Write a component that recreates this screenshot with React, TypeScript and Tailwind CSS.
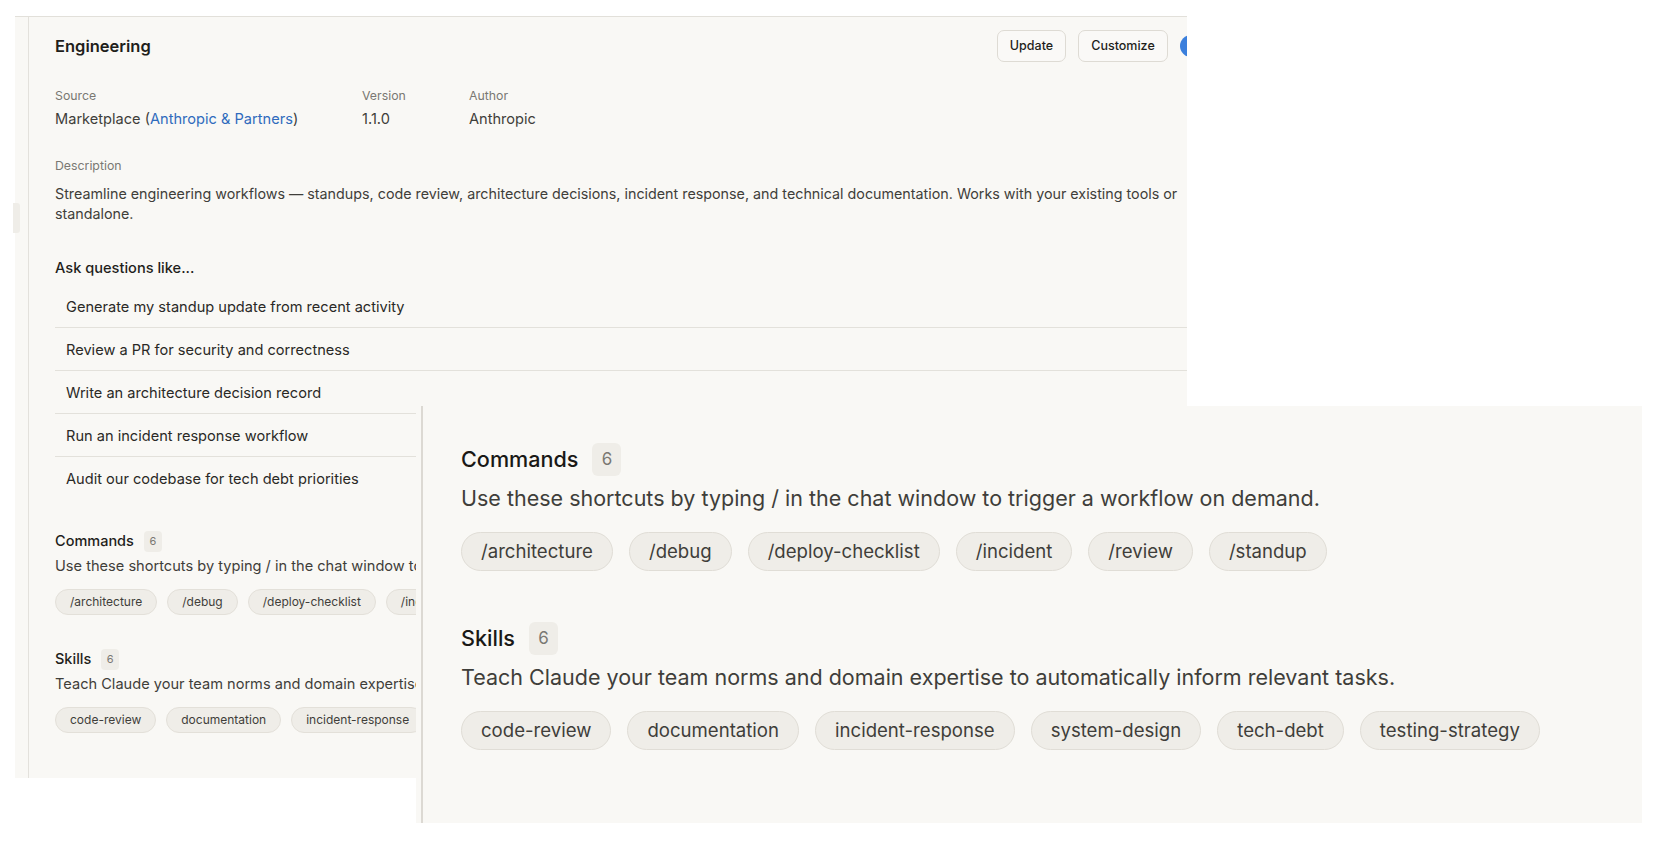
import React from "react";

const questions = [
  "Generate my standup update from recent activity",
  "Review a PR for security and correctness",
  "Write an architecture decision record",
  "Run an incident response workflow",
  "Audit our codebase for tech debt priorities",
];

const commands = ["/architecture", "/debug", "/deploy-checklist", "/incident", "/review", "/standup"];
const skills = ["code-review", "documentation", "incident-response", "system-design", "tech-debt", "testing-strategy"];

function SmallSection({ title, text, items, className }: { title: string; text: string; items: string[]; className?: string }) {
  return (
    <div className={className}>
      <div className="flex h-[22px] items-center gap-[10px]">
        <span className="text-[14.5px] font-medium text-[#1f1e1b]">{title}</span>
        <span className="flex h-[21px] w-[18px] items-center justify-center rounded-[4px] bg-[#efede8] text-[11px] text-[#7a7873]">
          {items.length}
        </span>
      </div>
      <p className="mt-[4px] whitespace-nowrap text-[14.6px] leading-[20px] text-[#3f3e3a]">{text}</p>
      <div className="mt-[13px] flex gap-[10px] whitespace-nowrap">
        {items.map((c) => (
          <span
            key={c}
            className="flex h-[26px] items-center rounded-full border border-[#e3e0d9] bg-[#efede8] px-[14px] text-[12px] text-[#3f3e3a]"
          >
            {c}
          </span>
        ))}
      </div>
    </div>
  );
}

function BigSection({ title, text, items, className }: { title: string; text: string; items: string[]; className?: string }) {
  return (
    <div className={className}>
      <div className="flex h-[33px] items-center gap-[14px]">
        <span className="text-[21.6px] font-medium text-[#1a1916]">{title}</span>
        <span className="flex h-[33px] w-[29px] items-center justify-center rounded-[6px] bg-[#efede8] text-[17px] text-[#7a7873]">
          {items.length}
        </span>
      </div>
      <p className="mt-[7px] whitespace-nowrap text-[21.5px] leading-[30px] text-[#3f3e3a]">{text}</p>
      <div className="mt-[19px] flex gap-[16px] whitespace-nowrap">
        {items.map((c) => (
          <span
            key={c}
            className="flex h-[39px] items-center rounded-full border border-[#e0ddd6] bg-[#efede8] px-[19px] text-[18.6px] text-[#3f3e3a]"
          >
            {c}
          </span>
        ))}
      </div>
    </div>
  );
}

export default function App() {
  return (
    <div className="relative h-[864px] w-[1672px] overflow-hidden bg-white font-['Inter','Noto_Sans',sans-serif]">
      {/* Fenster hinten */}
      <div className="ml-[15px] mt-[16px] flex h-[762px] w-[1172px] overflow-hidden border-t border-[#e2e0da] bg-[#f9f8f5]">
        <div className="w-[14px] shrink-0 border-r border-[#e3e1dc]" />
        <div className="w-[1189px] shrink-0 pl-[26px] pt-[13px]">
          {/* Kopf */}
          <div className="flex h-[32px] items-center">
            <h1 className="text-[16.5px] font-semibold text-[#1f1e1b]">Engineering</h1>
            <div className="ml-auto flex items-center gap-[12px]">
              <button className="h-[32px] w-[69px] rounded-[7px] border border-[#dedbd4] bg-[#faf9f7] text-[12.5px] font-medium text-[#1f1e1b]">
                Update
              </button>
              <button className="h-[32px] w-[90px] rounded-[7px] border border-[#dedbd4] bg-[#faf9f7] text-[12.5px] font-medium text-[#1f1e1b]">
                Customize
              </button>
              <span className="h-[22px] w-[38px] rounded-full bg-[#3b7fdc]" />
            </div>
          </div>

          {/* Meta */}
          <div className="mt-[26px] flex">
            <div className="w-[307px]">
              <p className="text-[12.3px] leading-[16px] text-[#7a7873]">Source</p>
              <p className="mt-[5px] text-[14.6px] leading-[20px] text-[#3f3e3a]">
                Marketplace (<span className="text-[#2f6bbd]">Anthropic &amp; Partners</span>)
              </p>
            </div>
            <div className="w-[107px]">
              <p className="text-[12.3px] leading-[16px] text-[#7a7873]">Version</p>
              <p className="mt-[5px] text-[14.6px] leading-[20px] text-[#3f3e3a]">1.1.0</p>
            </div>
            <div>
              <p className="text-[12.3px] leading-[16px] text-[#7a7873]">Author</p>
              <p className="mt-[5px] text-[14.6px] leading-[20px] text-[#3f3e3a]">Anthropic</p>
            </div>
          </div>

          <p className="mt-[29px] text-[12.3px] leading-[16px] text-[#7a7873]">Description</p>
          <p className="mt-[10px] text-[14.3px] leading-[20px] text-[#3f3e3a]">
            Streamline engineering workflows — standups, code review, architecture decisions, incident response, and
            technical documentation. Works with your existing tools or standalone.
          </p>

          <p className="mt-[34px] text-[14.6px] font-medium leading-[20px] text-[#1f1e1b]">Ask questions like...</p>
          <div className="mt-[7px]">
            {questions.map((q, i) => (
              <div
                key={q}
                className={
                  i < questions.length - 1
                    ? "flex h-[43px] items-center border-b border-[#e3e1db] pl-[11px] pt-[3px] text-[14.6px] text-[#2a2926]"
                    : "flex h-[43px] items-center pl-[11px] pt-[3px] text-[14.6px] text-[#2a2926]"
                }
              >
                {q}
              </div>
            ))}
          </div>

          <SmallSection
            className="mt-[30px]"
            title="Commands"
            text="Use these shortcuts by typing / in the chat window to trigger a workflow on demand."
            items={commands}
          />
          <SmallSection
            className="mt-[33px]"
            title="Skills"
            text="Teach Claude your team norms and domain expertise to automatically inform relevant tasks."
            items={skills}
          />
        </div>
      </div>

      {/* Reiter links */}
      <div className="absolute left-[13px] top-[203px] h-[30px] w-[7px] rounded-r-[3px] bg-[#efede8]" />

      {/* Vergrößerter Ausschnitt */}
      <div className="absolute left-[416px] top-[406px] flex h-[417px] w-[1226px] bg-[#f9f8f5]">
        <div className="w-[7px] shrink-0 border-r-2 border-[#dcd9d3]" />
        <div className="pl-[38px] pt-[37px]">
          <BigSection
            title="Commands"
            text="Use these shortcuts by typing / in the chat window to trigger a workflow on demand."
            items={commands}
          />
          <BigSection
            className="mt-[51px]"
            title="Skills"
            text="Teach Claude your team norms and domain expertise to automatically inform relevant tasks."
            items={skills}
          />
        </div>
      </div>
    </div>
  );
}
